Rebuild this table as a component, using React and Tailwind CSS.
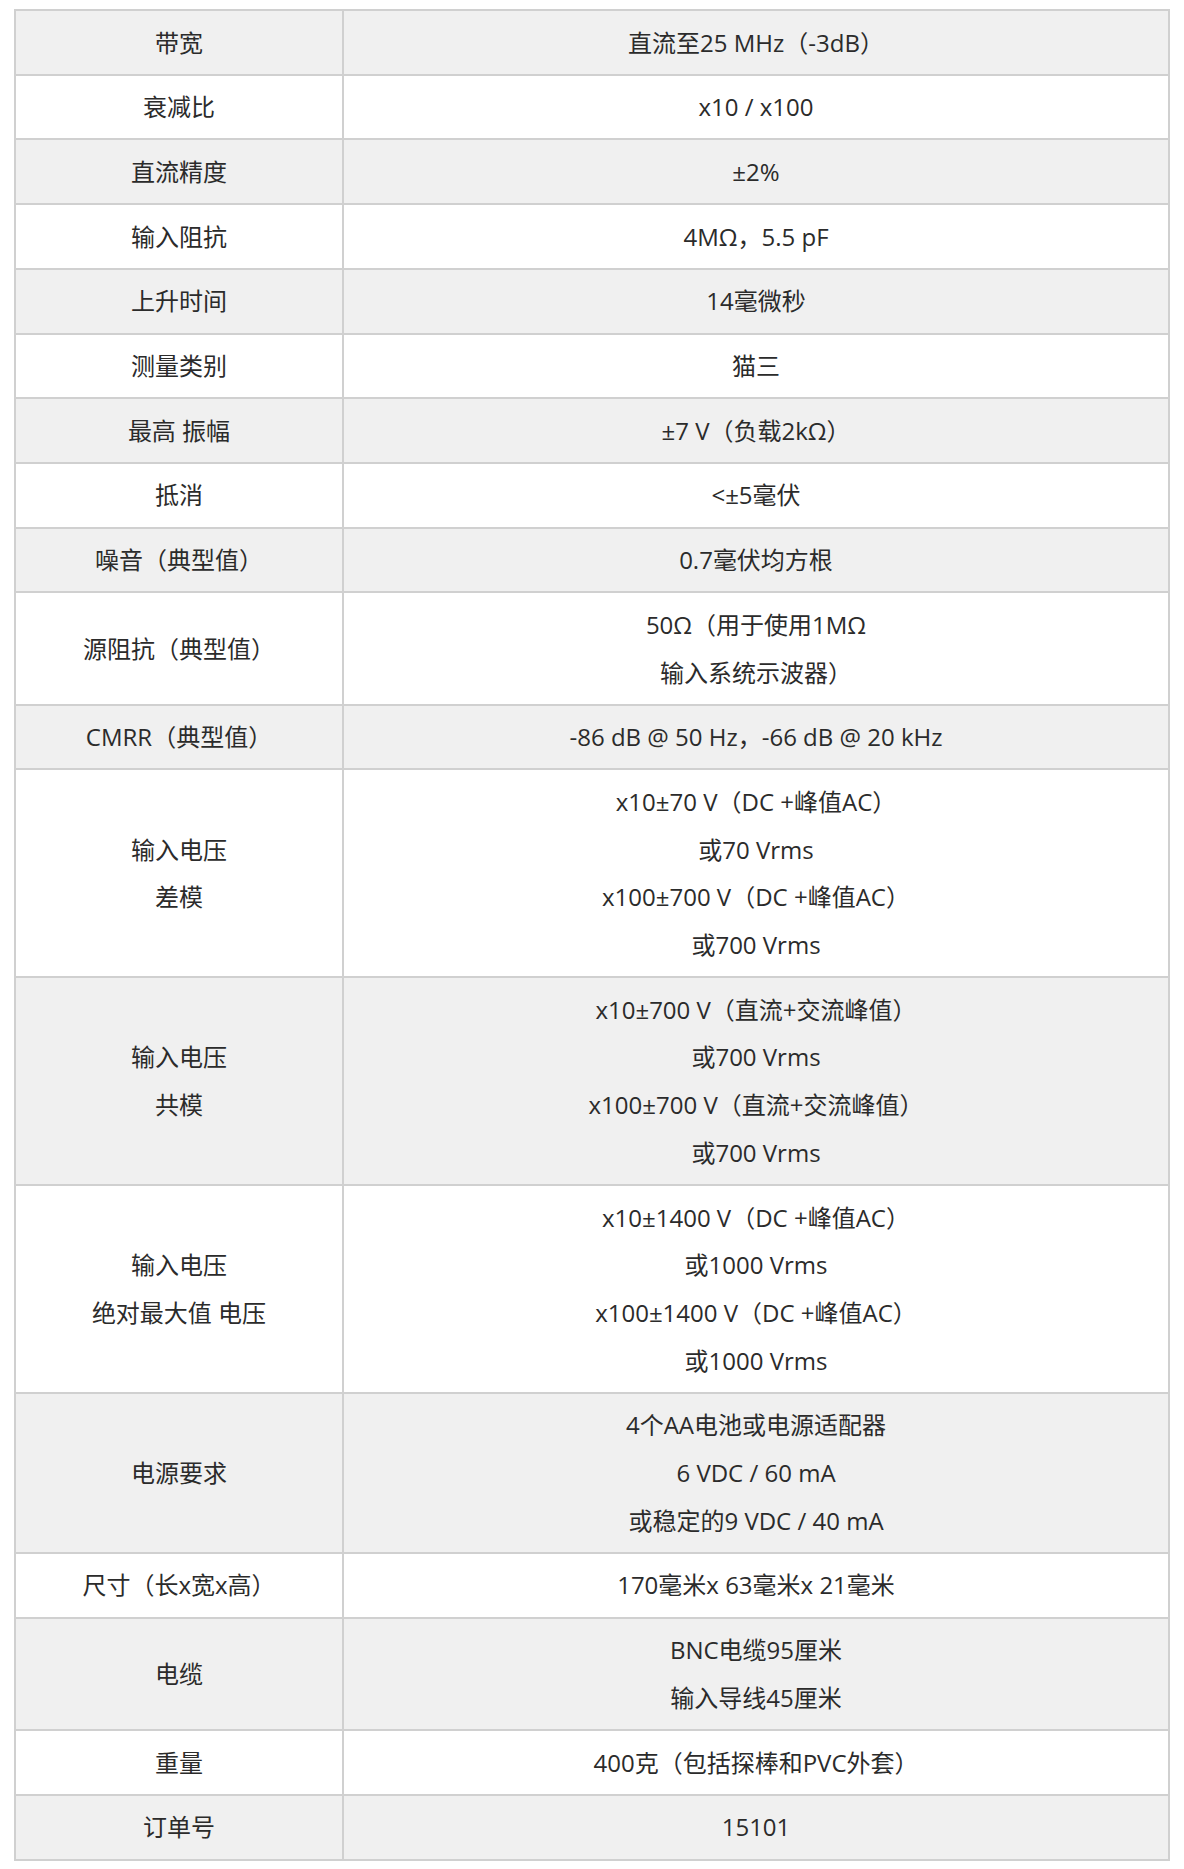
const rows = [
  ["带宽", ["直流至25 MHz（-3dB）"]],
  ["衰减比", ["x10 / x100"]],
  ["直流精度", ["±2%"]],
  ["输入阻抗", ["4MΩ，5.5 pF"]],
  ["上升时间", ["14毫微秒"]],
  ["测量类别", ["猫三"]],
  ["最高 振幅", ["±7 V（负载2kΩ）"]],
  ["抵消", ["<±5毫伏"]],
  ["噪音（典型值）", ["0.7毫伏均方根"]],
  ["源阻抗（典型值）", ["50Ω（用于使用1MΩ", "输入系统示波器）"]],
  ["CMRR（典型值）", ["-86 dB @ 50 Hz，-66 dB @ 20 kHz"]],
  [
    ["输入电压", "差模"],
    ["x10±70 V（DC +峰值AC）", "或70 Vrms", "x100±700 V（DC +峰值AC）", "或700 Vrms"],
  ],
  [
    ["输入电压", "共模"],
    ["x10±700 V（直流+交流峰值）", "或700 Vrms", "x100±700 V（直流+交流峰值）", "或700 Vrms"],
  ],
  [
    ["输入电压", "绝对最大值 电压"],
    ["x10±1400 V（DC +峰值AC）", "或1000 Vrms", "x100±1400 V（DC +峰值AC）", "或1000 Vrms"],
  ],
  ["电源要求", ["4个AA电池或电源适配器", "6 VDC / 60 mA", "或稳定的9 VDC / 40 mA"]],
  ["尺寸（长x宽x高）", ["170毫米x 63毫米x 21毫米"]],
  ["电缆", ["BNC电缆95厘米", "输入导线45厘米"]],
  ["重量", ["400克（包括探棒和PVC外套）"]],
  ["订单号", ["15101"]],
];

function Lines({ items }) {
  const list = Array.isArray(items) ? items : [items];
  return list.map((t, i) => (
    <div key={i} className="leading-[47.7px]">
      {t}
    </div>
  ));
}

export default function App() {
  return (
    <div
      className="bg-white px-[14px] pt-[9px] text-[#2b2b2b] text-[24px]"
      style={{ fontFamily: '"Open Sans", "Noto Sans CJK SC", sans-serif' }}
    >
      <table className="w-full border-collapse border-2 border-[#d0d0d0] table-fixed">
        <colgroup>
          <col className="w-[328px]" />
          <col />
        </colgroup>
        <tbody>
          {rows.map(([label, value], i) => (
            <tr key={i} className={i % 2 === 0 ? "bg-[#f0f0f0]" : "bg-white"}>
              <td className="border-2 border-[#d0d0d0] py-[7.5px] text-center align-middle">
                <Lines items={label} />
              </td>
              <td className="border-2 border-[#d0d0d0] py-[7.5px] text-center align-middle">
                <Lines items={value} />
              </td>
            </tr>
          ))}
        </tbody>
      </table>
      <p className="mt-[5px] pl-[60px] leading-[30px] text-[24px]">注：规格如有变更，恕不另行通知。</p>
    </div>
  );
}
